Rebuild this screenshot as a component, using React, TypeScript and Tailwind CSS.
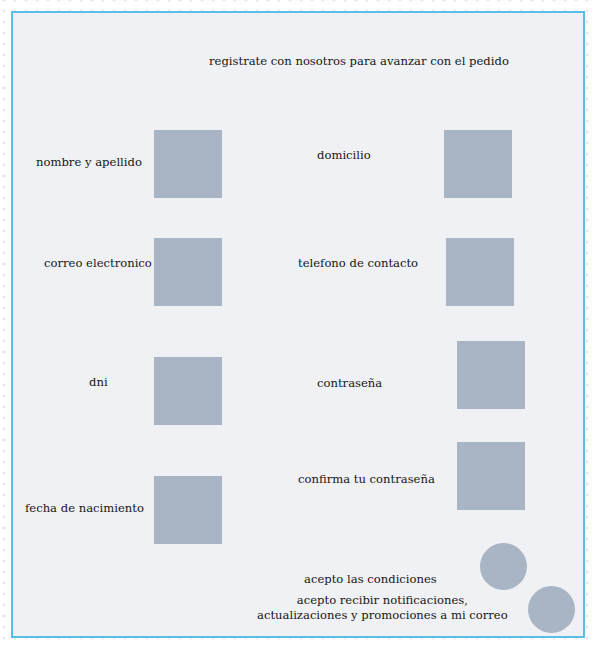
import React from "react";

const font = { fontFamily: '"DejaVu Serif", "Liberation Serif", serif' };

const box = "h-[68px] w-[68px] shrink-0 bg-[#a9b4c4]";
const circle = "h-[47px] w-[47px] shrink-0 rounded-full bg-[#a9b4c4]";
const label = "whitespace-nowrap text-[11.6px] leading-4 text-[#161616]";

export default function App() {
  return (
    <div
      className="h-[646px] w-[594px] overflow-hidden bg-white bg-[radial-gradient(circle,#cfd3da_0.9px,transparent_1.2px)] bg-[size:11px_11px] bg-[position:-1.5px_-5.5px] p-[11px]"
      style={font}
    >
      <div className="flex h-[627px] w-[574px] flex-col border-2 border-[#5cbde6] bg-[#eff1f5]">
        <div className={`${label} pl-[196px] pt-[40px]`}>registrate con nosotros para avanzar con el pedido</div>

        <div className="mt-[61px] flex">
          {/* left column */}
          <div className="flex w-[209px] flex-col">
            <div className="flex">
              <div className={`${label} w-[141px] pl-[23px] pt-[24px]`}>nombre y apellido</div>
              <div className={box} />
            </div>
            <div className="mt-[40px] flex">
              <div className={`${label} w-[141px] pl-[31px] pt-[17px]`}>correo electronico</div>
              <div className={box} />
            </div>
            <div className="mt-[51px] flex">
              <div className={`${label} w-[141px] pl-[76px] pt-[17px]`}>dni</div>
              <div className={box} />
            </div>
            <div className="mt-[51px] flex">
              <div className={`${label} w-[141px] pl-[12px] pt-[24px]`}>fecha de nacimiento</div>
              <div className={box} />
            </div>
          </div>

          {/* right column */}
          <div className="flex flex-col">
            <div className="flex">
              <div className={`${label} w-[222px] pl-[95px] pt-[17px]`}>domicilio</div>
              <div className={box} />
            </div>
            <div className="mt-[40px] flex">
              <div className={`${label} w-[224px] pl-[76px] pt-[17px]`}>telefono de contacto</div>
              <div className={box} />
            </div>
            <div className="mt-[35px] flex">
              <div className={`${label} w-[235px] pl-[95px] pt-[34px]`}>contraseña</div>
              <div className={box} />
            </div>
            <div className="mt-[33px] flex">
              <div className={`${label} w-[235px] pl-[76px] pt-[29px]`}>confirma tu contraseña</div>
              <div className={box} />
            </div>
            <div className="mt-[33px] flex">
              <div className={`${label} w-[258px] pl-[82px] pt-[28px]`}>acepto las condiciones</div>
              <div className={circle} />
            </div>
            <div className="-mt-[4px] flex">
              <div className="w-[306px] pl-[35px] pt-[7px]">
                <div className={`${label} flex w-fit flex-col items-center leading-[15px]`}>
                  <span>acepto recibir notificaciones,</span>
                  <span>actualizaciones y promociones a mi correo</span>
                </div>
              </div>
              <div className={circle} />
            </div>
          </div>
        </div>
      </div>
    </div>
  );
}
